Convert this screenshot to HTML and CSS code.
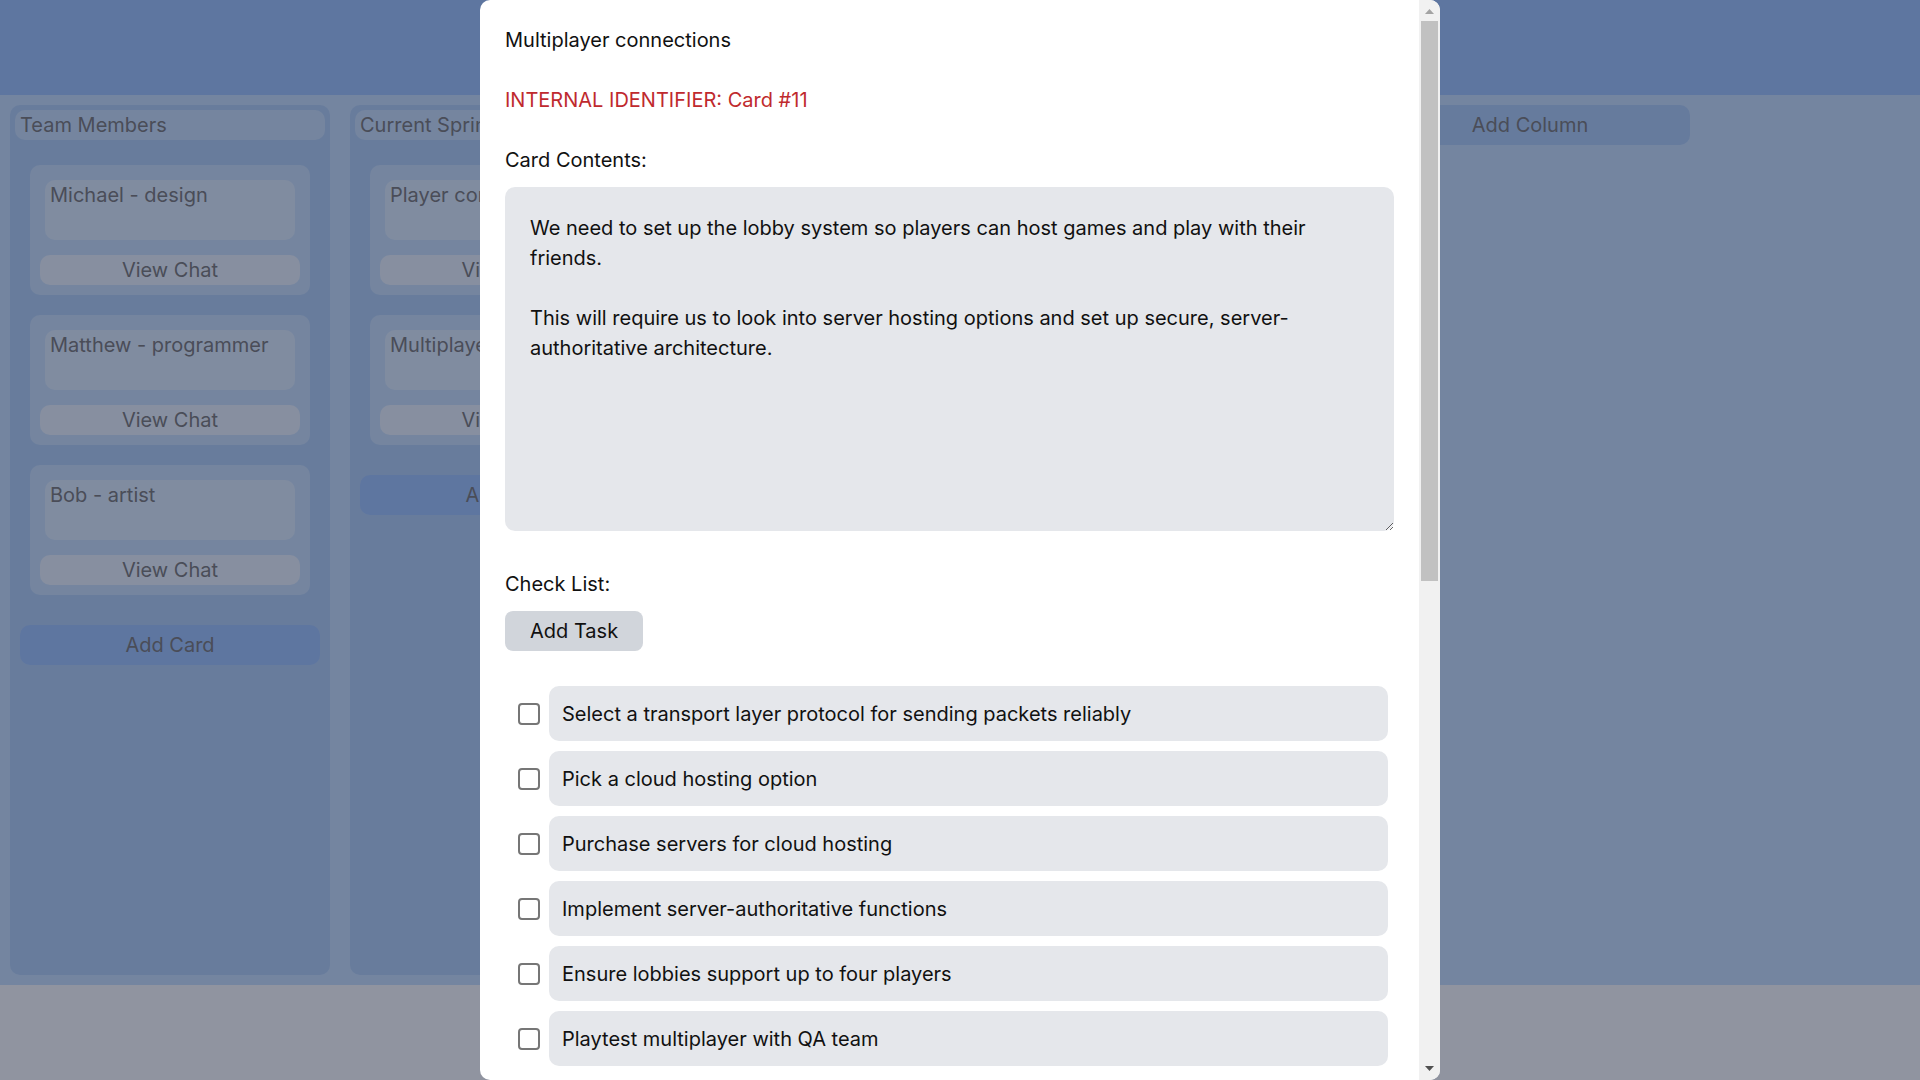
FILE: index.html
```html
<!DOCTYPE html>
<html lang="en">
<head>
<meta charset="utf-8">
<title>Project Board</title>
<link rel="stylesheet" href="styles.css">
</head>
<body>
<header class="topbar"></header>
<main class="board">
  <section class="column">
    <div class="column-title">Team Members</div>
    <div class="card">
      <div class="card-text">Michael - design</div>
      <button class="card-btn">View Chat</button>
    </div>
    <div class="card">
      <div class="card-text">Matthew - programmer</div>
      <button class="card-btn">View Chat</button>
    </div>
    <div class="card">
      <div class="card-text">Bob - artist</div>
      <button class="card-btn">View Chat</button>
    </div>
    <button class="add-card">Add Card</button>
  </section>
  <section class="column">
    <div class="column-title">Current Sprint</div>
    <div class="card">
      <div class="card-text">Player controls</div>
      <button class="card-btn">View Card</button>
    </div>
    <div class="card">
      <div class="card-text">Multiplayer connections</div>
      <button class="card-btn">View Card</button>
    </div>
    <button class="add-card">Add Card</button>
  </section>
  <section class="column">
    <div class="column-title">In Progress</div>
    <button class="add-card">Add Card</button>
  </section>
  <section class="column">
    <div class="column-title">Done</div>
    <button class="add-card">Add Card</button>
  </section>
  <button class="add-column">Add Column</button>
</main>

<div class="backdrop"></div>

<div class="modal">
  <div class="modal-body">
    <p class="modal-line">Multiplayer connections</p>
    <p class="modal-line ident">INTERNAL IDENTIFIER: Card #11</p>
    <p class="field-label">Card Contents:</p>
    <textarea class="contents">We need to set up the lobby system so players can host games and play with their friends.

This will require us to look into server hosting options and set up secure, server-authoritative architecture.</textarea>
    <p class="field-label">Check List:</p>
    <button class="add-task">Add Task</button>
    <ul class="tasks">
      <li class="task"><input type="checkbox" class="task-check"><input type="text" class="task-input" value="Select a transport layer protocol for sending packets reliably"></li>
      <li class="task"><input type="checkbox" class="task-check"><input type="text" class="task-input" value="Pick a cloud hosting option"></li>
      <li class="task"><input type="checkbox" class="task-check"><input type="text" class="task-input" value="Purchase servers for cloud hosting"></li>
      <li class="task"><input type="checkbox" class="task-check"><input type="text" class="task-input" value="Implement server-authoritative functions"></li>
      <li class="task"><input type="checkbox" class="task-check"><input type="text" class="task-input" value="Ensure lobbies support up to four players"></li>
      <li class="task"><input type="checkbox" class="task-check"><input type="text" class="task-input" value="Playtest multiplayer with QA team"></li>
    </ul>
  </div>
  <div class="scrollbar" aria-hidden="true">
    <div class="sb-btn">
      <svg width="21" height="19" viewBox="0 0 21 19"><polygon points="6,14 10.5,9 15,14" fill="#a3a3a3"/></svg>
    </div>
    <div class="sb-track"><div class="sb-thumb"></div></div>
    <div class="sb-btn">
      <svg width="21" height="19" viewBox="0 0 21 19"><polygon points="6,5 15,5 10.5,10" fill="#505050"/></svg>
    </div>
  </div>
</div>
</body>
</html>
```
FILE: styles.css
```css
* {
  box-sizing: border-box;
}

html,
body {
  margin: 0;
  padding: 0;
}

body {
  font-family: Inter, "Noto Sans", "Liberation Sans", sans-serif;
  font-size: 20px;
  color: #111;
  background: #ffffff;
  overflow: hidden;
}

button,
input,
textarea {
  font: inherit;
}

.topbar {
  height: 95px;
  background: #9bc3ff;
}

.board {
  height: 890px;
  padding: 10px;
  display: flex;
  gap: 20px;
  background: #c7e1ff;
}

.column {
  flex: 0 0 320px;
  display: flex;
  flex-direction: column;
  padding: 5px;
  border-radius: 10px;
  background: #afcff7;
}

.column-title {
  height: 30px;
  line-height: 30px;
  padding: 0 5px;
  margin-bottom: 25px;
  border-radius: 10px;
  background: #c9e1fd;
  color: #72706e;
  white-space: nowrap;
}

.card {
  margin: 0 15px 20px;
  padding: 15px 10px 10px;
  border-radius: 10px;
  background: #c9e1fd;
}

.card-text {
  height: 60px;
  margin: 0 5px 15px;
  padding: 3px 5px;
  line-height: 24px;
  border-radius: 10px;
  background: #dfefff;
  color: #72706e;
  white-space: nowrap;
  overflow: hidden;
}

.card-btn {
  display: block;
  width: 100%;
  height: 30px;
  padding: 0;
  border: 0;
  border-radius: 10px;
  background: #edf5ff;
  color: #72706e;
}

.add-card {
  height: 40px;
  margin: 10px 5px 0;
  padding: 0;
  border: 0;
  border-radius: 10px;
  background: #9bc3ff;
  color: #72706e;
}

.add-column {
  flex: 0 0 320px;
  align-self: flex-start;
  height: 40px;
  padding: 0;
  border: 0;
  border-radius: 10px;
  background: #abcdf9;
  color: #72706e;
}

.backdrop {
  position: fixed;
  inset: 0;
  background: rgba(33, 41, 65, 0.5);
}

.modal {
  position: fixed;
  top: 0;
  left: 480px;
  width: 960px;
  height: 1080px;
  display: flex;
  overflow: hidden;
  border-radius: 10px;
  background: #ffffff;
  color: #111;
}

.modal-body {
  flex: 1;
  min-width: 0;
  padding: 25px;
  overflow: hidden;
}

.scrollbar {
  flex: 0 0 21px;
  display: flex;
  flex-direction: column;
  background: #f1f1f1;
}

.sb-btn {
  height: 19px;
  flex: 0 0 19px;
}

.sb-btn svg {
  display: block;
}

.sb-track {
  flex: 1;
  padding: 2px;
}

.sb-thumb {
  height: 560px;
  background: #c1c1c1;
}

.modal-line {
  margin: 0 0 30px;
  line-height: 30px;
}

.ident {
  color: #bf2a2e;
}

.field-label {
  margin: 0 0 12px;
  line-height: 30px;
}

.contents {
  display: block;
  width: 100%;
  height: 344px;
  margin: 0 0 38px;
  padding: 26px 25px 24px;
  border: 0;
  border-radius: 10px;
  background: #e5e7eb;
  color: #111;
  line-height: 30px;
  outline: none;
}

.add-task {
  display: block;
  height: 40px;
  padding: 0 25px;
  border: 0;
  border-radius: 8px;
  background: #d1d5db;
  color: #111;
  margin-bottom: 35px;
}

.tasks {
  list-style: none;
  margin: 0;
  padding: 0;
  display: flex;
  flex-direction: column;
  gap: 10px;
}

.task {
  display: flex;
  align-items: center;
  gap: 9px;
  padding: 0 6px 0 13px;
}

.task-check {
  appearance: none;
  -webkit-appearance: none;
  flex: 0 0 22px;
  width: 22px;
  height: 22px;
  margin: 0;
  border: 2px solid #767676;
  border-radius: 4px;
  background: #ffffff;
}

.task-input {
  flex: 1;
  min-width: 0;
  height: 55px;
  padding: 0 13px;
  border: 0;
  border-radius: 10px;
  background: #e5e7eb;
  color: #111;
  outline: none;
}
```
